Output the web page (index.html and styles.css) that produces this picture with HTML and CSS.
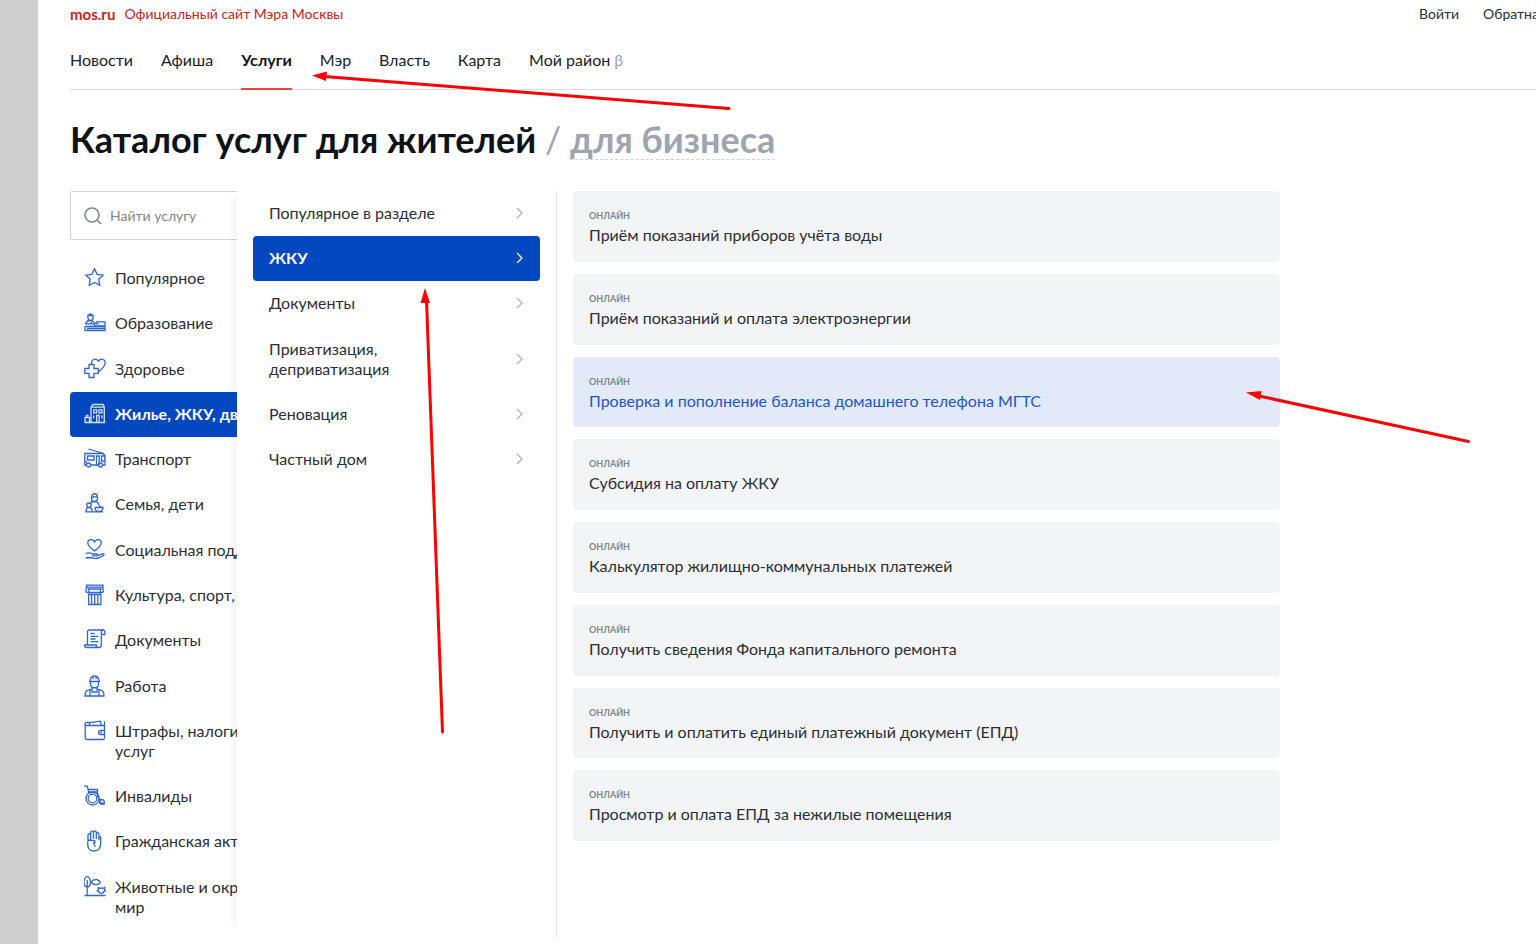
FILE: index.html
```html
<!DOCTYPE html>
<html lang="ru">
<head>
<meta charset="utf-8">
<title>Каталог услуг</title>
<link rel="stylesheet" href="styles.css">
</head>
<body>
<div class="page">
  <header class="header">
    <div class="topline">
      <a class="brand" href="#"><strong>mos.ru</strong><span>Официальный сайт Мэра Москвы</span></a>
      <div class="account"><a href="#">Войти</a><a href="#">Обратная связь</a></div>
    </div>
    <nav class="nav">
      <a href="#">Новости</a>
      <a href="#">Афиша</a>
      <a class="nav-active" href="#">Услуги</a>
      <a href="#">Мэр</a>
      <a href="#">Власть</a>
      <a href="#">Карта</a>
      <a href="#">Мой район <span class="beta">β</span></a>
    </nav>
  </header>

  <h1 class="title">Каталог услуг для жителей <span class="slash">/</span> <a class="title-alt" href="#">для бизнеса</a></h1>

  <main class="catalog">
    <aside class="sidebar">
      <div class="sidebar-inner">
        <label class="search">
          <svg viewBox="0 0 18 18" width="18" height="18"><circle cx="8" cy="8" r="7"/><path d="M13 13l4 4"/></svg>
          <input type="text" placeholder="Найти услугу" aria-label="Найти услугу">
        </label>
        <ul class="sections">
          <li><a href="#"><svg class="icon" viewBox="0 0 22 22"><path d="M10.500 1.800l2.600 5.500 6 .8-4.400 4.200 1.100 6-5.300-2.900-5.300 2.900 1.100-6L1.900 8.100l6-.8z"/></svg><span>Популярное</span></a></li>
          <li><a href="#"><svg class="icon" viewBox="0 0 22 22"><path d="M4 3.500l2.500-1.800L9 3.500M3.900 3.500h5.200v2.200a2.600 2.600 0 0 1-5.200 0zM2 12c0-2.500 1.500-3.500 4.300-3.500 2.500 0 3.400 1 4.200 2.500l4 1M1 11.800h8l3 2h9v-4h-9M1 14.500h20v4H1v-4M3 16.500h18M8 12l-1-2"/></svg><span>Образование</span></a></li>
          <li><a href="#"><svg class="icon" viewBox="0 0 22 22"><path d="M5 6.500h5v4h4.200v4.800H10v4.200H5v-4.200H.8v-4.800H5zM7.500 6.500C7 3 9 1.200 11 1.200c1.500 0 2.600.8 3.400 2C15.200 2 16.300 1.200 18 1.200c2 0 3.300 2 3.200 4-.1 3-3 5.500-7 9"/></svg><span>Здоровье</span></a></li>
          <li><a class="section-active" href="#"><svg class="icon" viewBox="0 0 22 22"><path d="M7 19.500V4l2-2.500h10L20.300 4v15.500M7 4.200h13.300M.5 19.500h20.700M1 19.500v-5h4.500v5M2.500 14.500v-2h2M9.700 6.800h3v3h-3zM15 6.800h3v3h-3zM9.700 12.500v3M12.700 19.500v-7h2.500v7M18 12.500v3"/></svg><span>Жилье, ЖКУ, дворы</span></a></li>
          <li><a href="#"><svg class="icon" viewBox="0 0 22 22"><path d="M2 17H.8V5.500H19l2 2V17h-2M7 17h7M4.500 1L20 5.500M3.500 8h6.500v4H3.500zM12.500 17V8h2.700v9M17.500 8h3.300v5h-3.300zM1 14h2"/><circle cx="4.500" cy="17" r="2"/><circle cx="16.500" cy="17" r="2"/></svg><span>Транспорт</span></a></li>
          <li><a href="#"><svg class="icon" viewBox="0 0 22 22"><path d="M7.500 4.500c0-5 6-5 6 0v1.300c0 3.500-6 3.500-6 0zM7.500 4.500c2 0 3-1 3-1l3 1M6 10.500c1-1.700 2.500-2 4.500-2s4 .8 4.500 4M2 18.800c0-3 .8-4.300 3-4.300s3.200 1.300 3.200 4.300zM8 18.800h11M11 14.500h8c0 2.500-1.500 4-4 4s-4-1.500-4-4M15 12.800l3 1.700"/><circle cx="5" cy="12.200" r="2.200"/></svg><span>Семья, дети</span></a></li>
          <li><a href="#"><svg class="icon" viewBox="0 0 22 22"><path d="M10.500 12C6 8.800 3.800 6.500 3.800 3.800 3.800 1.800 5.200.6 7 .6c1.600 0 2.800.9 3.500 2.300C11.200 1.500 12.400.6 14 .6c1.800 0 3.200 1.200 3.200 3.200 0 2.700-2.200 5-6.700 8.200zM1.500 14.500c3-1.200 5-.8 7 .5h4c1.500 0 1.500 1.800 0 1.800H8M13.500 16.300l5-1.500c1.800-.3 2 1 .8 1.700-3 1.800-4.800 3-7.300 3s-4-1-7-1L1.500 19"/></svg><span>Социальная поддержка</span></a></li>
          <li><a href="#"><svg class="icon" viewBox="0 0 22 22"><path d="M2.500 1.200h16.500v2H2.500zM3 3.200C1.500 4 1.500 8.500 3.200 8.500S5.500 6 4.500 5h12.500c-1 1-.8 3.500 1 3.500s1.700-4.500.2-5.300M5 8.500h11.500v2H5zM4.700 10.500v10h12.200v-10M7.600 10.500v10M10.700 10.500v10M13.800 10.500v10"/></svg><span>Культура, спорт, отдых</span></a></li>
          <li><a href="#"><svg class="icon" viewBox="0 0 22 22"><path d="M3.500 16V3c0-1.200.8-2 2-2h13.300c1.500 0 2 1 2 2v2.500h-3.500M17.300 5.500V3c0-1.200.7-2 1.600-2M17.300 5.500V16c0 1.600-1 2.500-2.300 2.500H2.300C1 18.500.5 17.500.5 16h11.700c0 1.500.6 2.500 2 2.500M6.500 4.500h4M6.500 7.300h8M6.500 10h5M6.500 12.700h8"/></svg><span>Документы</span></a></li>
          <li><a href="#"><svg class="icon" viewBox="0 0 22 22"><path d="M5 6.500h11M6 6.500C6 3 7.500 1 10.500 1S15 3 15 6.500M9 1.200v3M12 1.200v3M6.500 6.500V9c0 5 8 5 8 0V6.500M8 12v2l-4.500 1.300C1.500 16 1 17.500 1 21h19c0-3.500-.5-5-2.500-5.700L13 14v-2M6 14.800V21M15 14.800V21M8 14v3h5v-3"/></svg><span>Работа</span></a></li>
          <li><a href="#"><svg class="icon" viewBox="0 0 22 22"><path d="M3 5.500h16c1 0 1.500.6 1.500 1.500v11c0 1-.5 1.500-1.500 1.500H3c-1 0-1.800-.6-1.800-1.700V4C1.200 3 2 2.300 3 2.300h3M1.500 4.800C1.800 5.300 2.300 5.500 3 5.500M5 5.200l1-2.500 10.500-1.500.8 4M20.500 1.200V7M20.500 10.500h-4c-2.500 0-2.500 4 0 4h4zM16.500 12.500h1.500"/></svg><span>Штрафы, налоги, оплата<br>услуг</span></a></li>
          <li><a href="#"><svg class="icon" viewBox="0 0 22 22"><circle cx="8.500" cy="13.500" r="6.500"/><circle cx="8.500" cy="13.500" r="4.300"/><path d="M0 1.200h3.200L5 8M4 4.500h9.500v7.500M4.500 7h9M13.500 8l2 6.500h2M15 17.500l6 1.500"/><circle cx="18" cy="17" r="2.300"/></svg><span>Инвалиды</span></a></li>
          <li><a href="#"><svg class="icon" viewBox="0 0 22 22"><path d="M4 10V5c0-1.800 2.700-1.800 2.700 0v5M6.700 5V2.500c0-1.800 2.800-1.800 2.800 0V9M9.500 2.500c0-2 2.800-2 2.800 0V9M12.300 4c0-1.800 2.700-1.800 2.700 0v6M4 10c-1.200 6.500.5 11 6 11 5 0 6.700-3 6.700-8V7.500c0-1.300-1.700-1.300-1.700 0M4 10l5 .5c3 .2 3 2.500 0 2.500 1.700.8 2 2 2.200 4"/></svg><span>Гражданская активность</span></a></li>
          <li><a href="#"><svg class="icon" viewBox="0 0 22 22"><path d="M3.200 4v15.500M.5 19.500h21M0 6c0-3 1.500-5.300 3.200-5.300S6.400 3 6.400 6s-1.200 5-3.200 5S0 9 0 6zM7.500 6.500c0-2.200 2-3 3.200-2.500 1.300-1 3-.5 3.600.5 2 0 2.300 2.300 1 3.200-1.600 1.200-5.800 1.500-7.800-1.200zM14.200 11.500l1.800.8c1-.4 2-.4 3 0l1.800-.8-.3 2.500 1 1-1.500.5c-.8 2.500-4.500 2.500-5.200 0l-1.500-.5 1.200-1z"/></svg><span>Животные и окружающий<br>мир</span></a></li>
        </ul>
      </div>
    </aside>

    <section class="panel">
      <ul class="topics">
        <li><a href="#"><span>Популярное в разделе</span><svg class="chevron" viewBox="0 0 8 12"><path d="M1 1l5 5-5 5"/></svg></a></li>
        <li><a class="topic-active" href="#"><span>ЖКУ</span><svg class="chevron" viewBox="0 0 8 12"><path d="M1 1l5 5-5 5"/></svg></a></li>
        <li><a href="#"><span>Документы</span><svg class="chevron" viewBox="0 0 8 12"><path d="M1 1l5 5-5 5"/></svg></a></li>
        <li><a href="#"><span>Приватизация,<br>деприватизация</span><svg class="chevron" viewBox="0 0 8 12"><path d="M1 1l5 5-5 5"/></svg></a></li>
        <li><a href="#"><span>Реновация</span><svg class="chevron" viewBox="0 0 8 12"><path d="M1 1l5 5-5 5"/></svg></a></li>
        <li><a href="#"><span>Частный дом</span><svg class="chevron" viewBox="0 0 8 12"><path d="M1 1l5 5-5 5"/></svg></a></li>
      </ul>
    </section>

    <section class="services">
      <a class="card" href="#"><small>ОНЛАЙН</small><span>Приём показаний приборов учёта воды</span></a>
      <a class="card" href="#"><small>ОНЛАЙН</small><span>Приём показаний и оплата электроэнергии</span></a>
      <a class="card card-active" href="#"><small>ОНЛАЙН</small><span>Проверка и пополнение баланса домашнего телефона МГТС</span></a>
      <a class="card" href="#"><small>ОНЛАЙН</small><span>Субсидия на оплату ЖКУ</span></a>
      <a class="card" href="#"><small>ОНЛАЙН</small><span>Калькулятор жилищно-коммунальных платежей</span></a>
      <a class="card" href="#"><small>ОНЛАЙН</small><span>Получить сведения Фонда капитального ремонта</span></a>
      <a class="card" href="#"><small>ОНЛАЙН</small><span>Получить и оплатить единый платежный документ (ЕПД)</span></a>
      <a class="card" href="#"><small>ОНЛАЙН</small><span>Просмотр и оплата ЕПД за нежилые помещения</span></a>
    </section>
  </main>
</div>

<svg class="arrows" viewBox="0 0 1536 944" width="1536" height="944" aria-hidden="true">
  <path d="M324 76.500L729 108.500M426.500 300L442.500 732M1259 396L1468.500 441.500"/>
  <path class="arrow-head" d="M312 75.500l15-4-1 9.500zM425 288l-4.500 15h9.500zM1246 392.500l15.500-1.500-1.500 9z"/>
</svg>
</body>
</html>
```

FILE: styles.css
```css
* { box-sizing: border-box; }

body {
  margin: 0;
  background: #fff;
  color: #2b2f33;
  font: 16px/20px Lato, "Open Sans", sans-serif;
  overflow: hidden;
}

a { color: inherit; text-decoration: none; }
ul { list-style: none; margin: 0; padding: 0; }

.page {
  min-height: 100vh;
  border-left: 38px solid #cfcfcf;
  padding-left: 32px;
}

.header { border-bottom: 1px solid #dcdddf; }

.topline {
  display: flex;
  justify-content: space-between;
  height: 40px;
  padding-top: 4px;
  font-size: 14px;
}

.brand { display: flex; gap: 9px; color: #cc2222; }
.brand strong { font-size: 15px; }

.account {
  display: flex;
  gap: 24px;
  width: 117px;
  overflow: hidden;
  white-space: nowrap;
}

.nav { display: flex; gap: 28px; color: #1c2025; }
.nav a { padding: 10px 0 18px; }

.nav .nav-active {
  margin-bottom: -1px;
  border-bottom: 2px solid #dc4a4a;
  font-weight: 700;
  color: #101418;
}

.beta { color: #9ea5ae; }

.title {
  margin: 0;
  padding: 27px 0 30px;
  font-size: 36px;
  line-height: 44px;
  font-weight: 700;
  color: #0f1318;
}

.slash { font-weight: 400; color: #9ea5ae; }

.title-alt {
  display: inline-block;
  line-height: 40px;
  color: #9ea5ae;
  border-bottom: 1px dashed #cdd1d6;
}

.catalog {
  display: grid;
  grid-template-columns: 167px 320px minmax(0, 1fr);
  max-width: 1210px;
}

.sidebar { overflow: hidden; }
.sidebar-inner { width: 320px; }

.search {
  display: flex;
  align-items: center;
  gap: 8px;
  height: 49px;
  padding: 0 13px;
  border: 1px solid #d0d4d9;
  border-radius: 2px;
}

.search svg { fill: none; stroke: #80868d; stroke-width: 1.6; }

.search input {
  flex: 1;
  min-width: 0;
  border: 0;
  padding: 0;
  outline: 0;
  background: none;
  font: inherit;
  font-size: 14px;
}

.search input::placeholder { color: #80868d; opacity: 1; }

.sections {
  display: flex;
  flex-direction: column;
  min-height: 674px;
  margin-top: 16px;
}

.sections li, .topics li { flex: 1 0 auto; display: flex; }

.sections a {
  flex: 1;
  display: flex;
  gap: 9px;
  padding: 12px 14px 13px;
  border-radius: 4px;
  white-space: nowrap;
}

.icon {
  flex: none;
  width: 22px;
  height: 22px;
  margin: -1px 0;
  fill: none;
  stroke: #2f66d0;
  stroke-width: 1.3;
}

.sections .section-active { background: #0448bf; color: #fff; font-weight: 700; }
.section-active .icon { stroke: #d5e1f7; }

.panel {
  position: relative;
  z-index: 1;
  height: 747px;
  padding: 0 16px;
  background: #fff;
  border-right: 1px solid #e2e5ee;
}

/* soft shadow cast onto the sidebar */
.panel::before {
  content: "";
  position: absolute;
  top: 6px;
  bottom: 12px;
  left: -10px;
  width: 10px;
  background: linear-gradient(to left, rgba(0, 0, 0, 0.04), rgba(0, 0, 0, 0));
}

.topics { display: flex; flex-direction: column; min-height: 291px; }

.topics a {
  flex: 1;
  display: flex;
  align-items: center;
  justify-content: space-between;
  padding: 12px 16px 13px;
  border-radius: 4px;
}

.chevron { width: 8px; height: 12px; fill: none; stroke: #adb3ba; stroke-width: 1.3; }
.topics .topic-active { background: #0448bf; color: #fff; font-weight: 700; }
.topic-active .chevron { stroke: #fff; }

.services {
  display: flex;
  flex-direction: column;
  align-self: start;
  gap: 12px;
  min-height: 650px;
  padding-left: 16px;
}

.card {
  flex: 1 0 auto;
  display: flex;
  flex-direction: column;
  padding: 17px 16px 16px;
  border-radius: 4px;
  background: #f3f4f6;
}

.card small { font-size: 9px; line-height: 16px; font-weight: 700; color: #80868d; }
.card span { line-height: 21px; }
.card-active { background: #e2e9f8; }
.card-active span { color: #1c56cc; }

.arrows {
  position: absolute;
  top: 0;
  left: 0;
  z-index: 2;
  pointer-events: none;
  fill: none;
  stroke: #f00;
  stroke-width: 3;
  stroke-linecap: round;
}

.arrow-head { fill: #f00; stroke: none; }
```
